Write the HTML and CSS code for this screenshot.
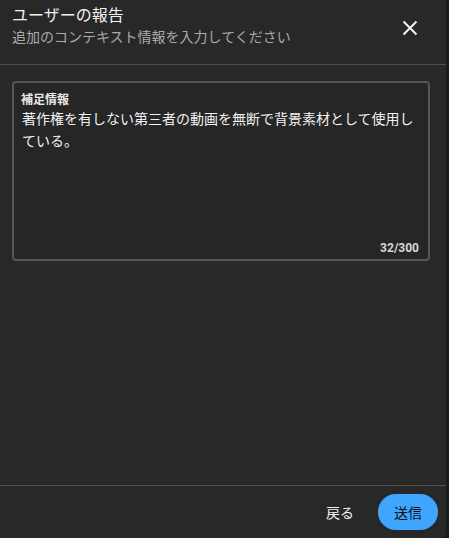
FILE: index.html
```html
<!DOCTYPE html>
<html lang="ja">
<head>
    <meta charset="UTF-8">
    <meta name="viewport" content="width=device-width, initial-scale=1.0">
    <title>ユーザーの報告</title>
    <link rel="stylesheet" href="styles.css">
</head>
<body>
    <div class="dialog">
        <div class="dialog-header">
            <div class="dialog-titles">
                <div class="dialog-title">ユーザーの報告</div>
                <div class="dialog-subtitle">追加のコンテキスト情報を入力してください</div>
            </div>
            <button class="btn-close" aria-label="閉じる">
                <svg width="24" height="24" viewBox="0 0 24 24">
                    <path d="M5.5 5.5 L18.5 18.5 M18.5 5.5 L5.5 18.5" stroke="#f1f1f1" stroke-width="2" fill="none"/>
                </svg>
            </button>
        </div>
        <div class="dialog-body">
            <div class="field">
                <label class="field-label">補足情報</label>
                <div class="field-text">著作権を有しない第三者の動画を無断で背景素材として使用している。</div>
                <div class="field-count">32/300</div>
            </div>
        </div>
        <div class="dialog-footer">
            <button class="btn-back">戻る</button>
            <button class="btn-submit">送信</button>
        </div>
    </div>
</body>
</html>
```

FILE: styles.css
```css
body {
    margin: 0;
    padding: 0;
    background-color: #1a1a1a;
    font-family: Roboto, "Noto Sans CJK JP", sans-serif;
    color: #f1f1f1;
}
.dialog {
    width: 446px;
    height: 538px;
    background-color: #282828;
    border-bottom-right-radius: 6px;
    display: flex;
    flex-direction: column;
}
.dialog-header {
    display: flex;
    align-items: flex-start;
    justify-content: space-between;
    height: 64px;
    border-bottom: 1px solid #4f4f4f;
}
.dialog-titles {
    padding: 5px 0 0 12px;
}
.dialog-title {
    font-size: 16px;
    line-height: 22px;
    color: #f1f1f1;
}
.dialog-subtitle {
    font-size: 14px;
    line-height: 20px;
    color: #aaaaaa;
}
.btn-close {
    background: none;
    border: none;
    padding: 0;
    margin: 16px 24px 0 0;
    width: 24px;
    height: 24px;
    cursor: pointer;
}
.dialog-body {
    flex: 1;
    padding: 16px 16px 0 12px;
}
.field {
    height: 167px;
    border: 2px solid #555555;
    border-radius: 4px;
    background-color: #262626;
    padding: 9px 9px 0 7px;
    display: flex;
    flex-direction: column;
}
.field-label {
    font-size: 12px;
    line-height: 16px;
    font-weight: bold;
    color: #e8e8e8;
}
.field-text {
    flex: 1;
    font-size: 14px;
    line-height: 22px;
    color: #f1f1f1;
    padding-left: 1px;
}
.field-count {
    text-align: right;
    font-size: 12px;
    line-height: 14px;
    font-weight: bold;
    color: #d8d8d8;
    padding-bottom: 4px;
}
.dialog-footer {
    border-top: 1px solid #4f4f4f;
    height: 52px;
    display: flex;
    align-items: center;
    justify-content: flex-end;
    gap: 8px;
    padding-right: 8px;
}
.btn-back {
    background: none;
    border: none;
    color: #f1f1f1;
    font-family: inherit;
    font-size: 14px;
    padding: 0 16px;
    height: 36px;
    cursor: pointer;
}
.btn-submit {
    background-color: #3ea6ff;
    border: none;
    border-radius: 18px;
    color: #0f0f0f;
    font-family: inherit;
    font-size: 14px;
    width: 60px;
    height: 36px;
    cursor: pointer;
}
```
